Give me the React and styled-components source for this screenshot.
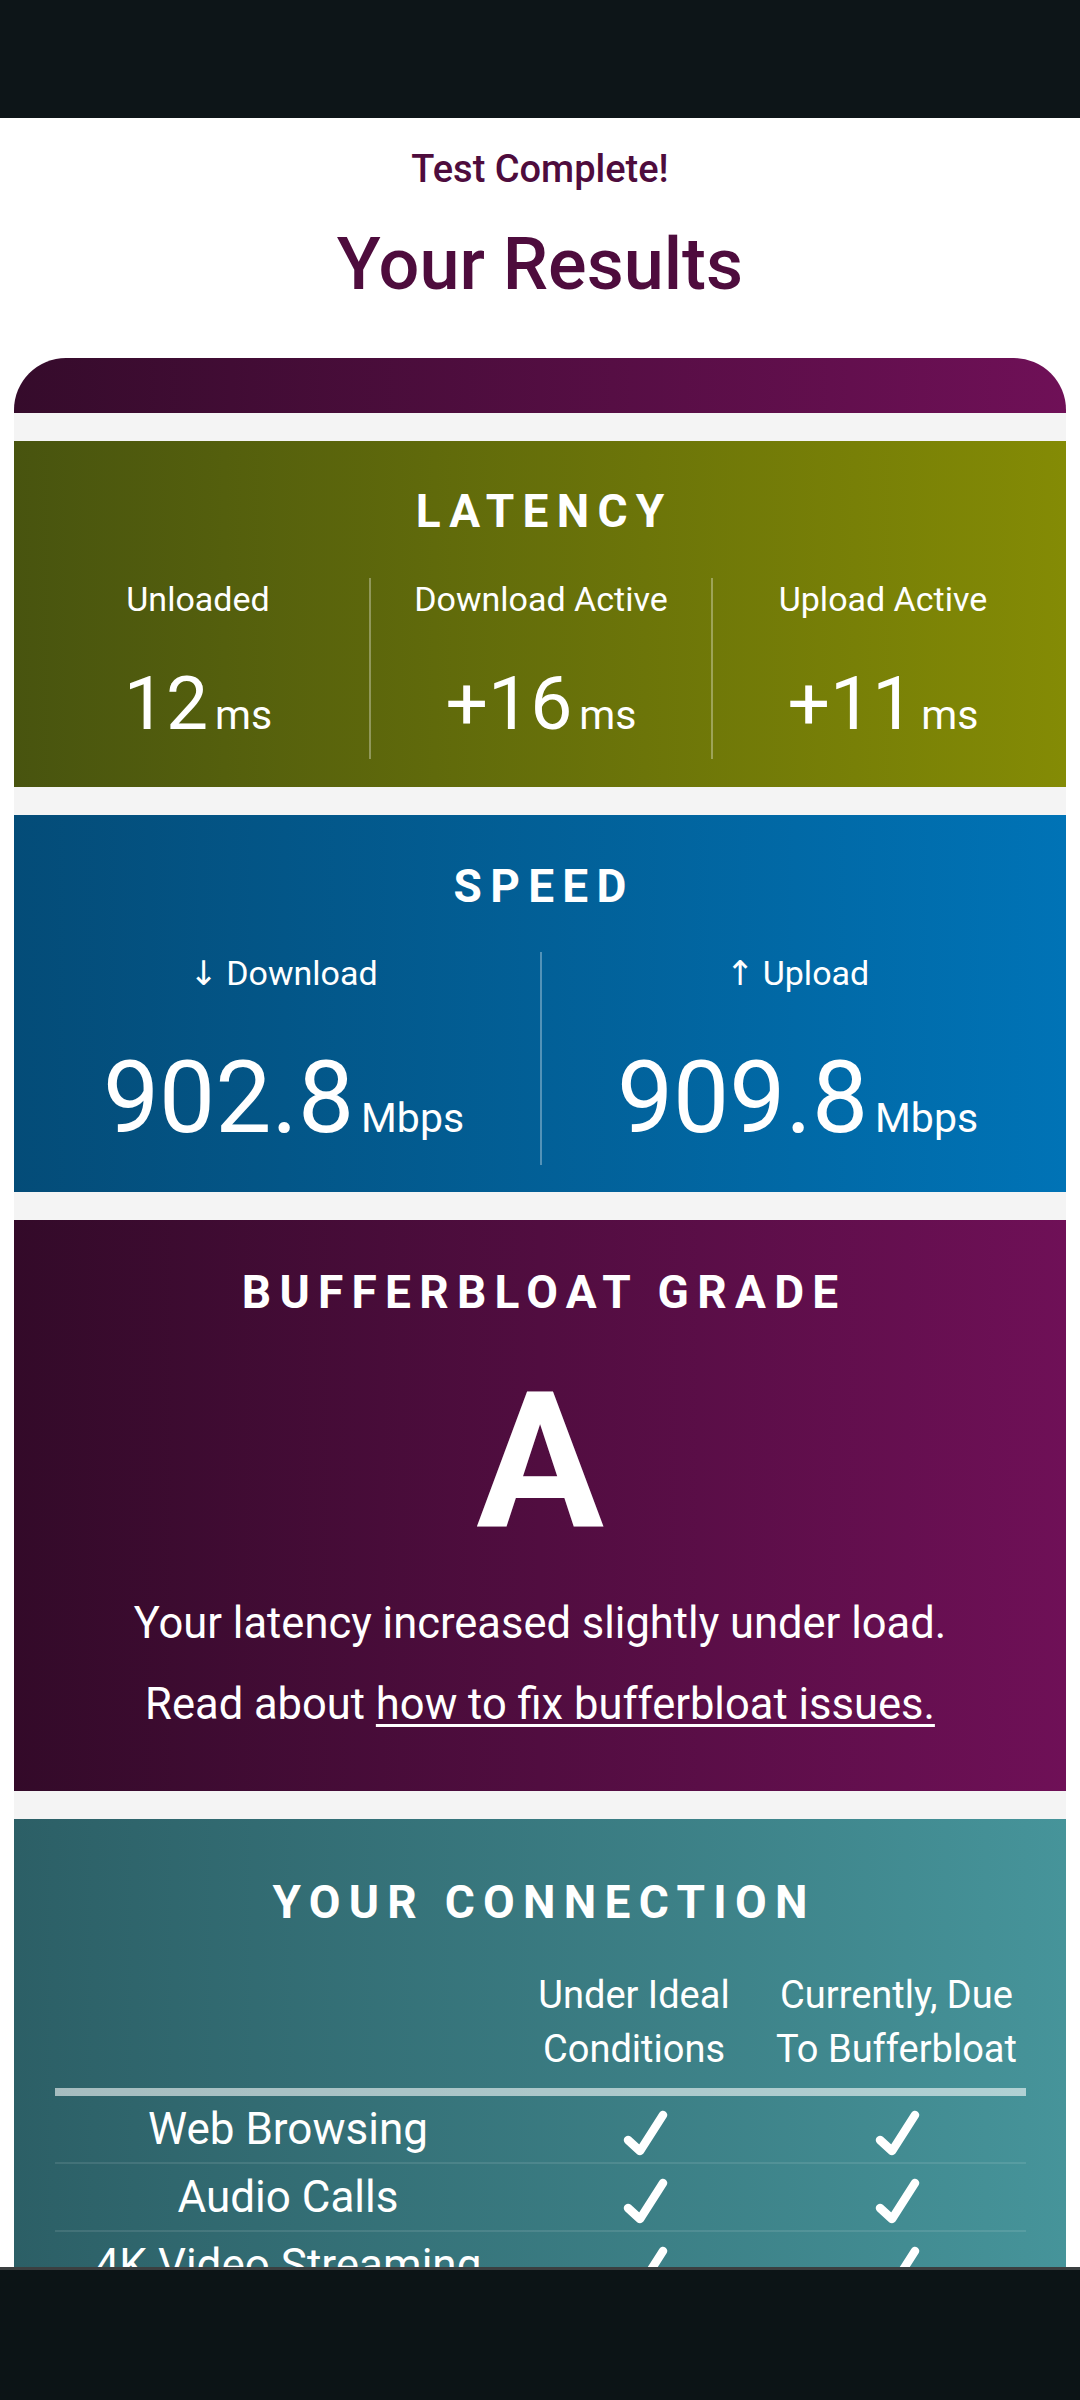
import React from 'react';
import styled, { createGlobalStyle } from 'styled-components';

const GlobalStyle = createGlobalStyle`
  body {
    margin: 0;
    background: #ffffff;
    font-family: Roboto, "Open Sans", "DejaVu Sans", sans-serif;
    color: #ffffff;
  }
`;

const StatusBar = styled.div`
  height: 118px;
  background: #0d1518;
`;

const Intro = styled.header`
  text-align: center;
  color: #4e0c3d;
  padding-top: 32px;
`;

const Kicker = styled.div`
  font-size: 38px;
  font-weight: 500;
  line-height: 1;
`;

const Heading = styled.h1`
  margin: 41px 0 0;
  font-size: 72px;
  font-weight: 500;
  line-height: 1;
`;

const Results = styled.section`
  margin: 57px 14px 0;
`;

const Tab = styled.div`
  height: 55px;
  border-radius: 52px 52px 0 0;
  background: linear-gradient(90deg, #350b2b 0%, #6f1057 100%);
`;

const Stack = styled.div`
  display: flex;
  flex-direction: column;
  gap: 28px;
  padding-top: 28px;
  background: #f4f4f4;
`;

const Panel = styled.div`
  background: linear-gradient(90deg, ${(p) => p.$from} 0%, ${(p) => p.$to} 100%);
  padding: ${(p) => p.$pad};
  text-align: center;
`;

const PanelTitle = styled.h2`
  margin: 0 0 ${(p) => p.$gap || 44}px;
  font-size: 46px;
  font-weight: 700;
  line-height: 1;
  letter-spacing: 0.18em;
  text-indent: 0.18em;
`;

const Columns = styled.div`
  display: grid;
  grid-template-columns: repeat(${(p) => p.$count}, 1fr);
`;

const Column = styled.div`
  display: flex;
  flex-direction: column;
  align-items: center;
  padding: 4px 0 ${(p) => p.$bottom}px;
  & + & {
    border-left: 2px solid rgba(255, 255, 255, 0.32);
  }
`;

const Label = styled.div`
  font-size: 34px;
  line-height: 1;
  margin-bottom: ${(p) => p.$gap}px;
`;

const Value = styled.div`
  font-size: ${(p) => p.$size}px;
  line-height: 1;
  white-space: nowrap;
`;

const Unit = styled.span`
  font-size: ${(p) => p.$size}px;
  margin-left: 7px;
`;

const Grade = styled.div`
  font-size: 190px;
  font-weight: 700;
  line-height: 1;
  margin-bottom: 44px;
`;

const Note = styled.p`
  margin: 0;
  font-size: 43.5px;
  line-height: 48px;
  & + & {
    margin-top: 33px;
  }
`;

const Link = styled.a`
  color: #ffffff;
  text-decoration: underline;
  text-decoration-thickness: 3px;
  text-underline-offset: 5px;
`;

const Table = styled.div`
  margin: 0 40px 0 41px;
`;

const TableHead = styled.div`
  display: grid;
  grid-template-columns: 446px 266px 1fr;
  padding-bottom: 12px;
  border-bottom: 8px solid rgba(255, 255, 255, 0.58);
`;

const HeadCell = styled.div`
  font-size: 38px;
  line-height: 54px;
`;

const Row = styled.div`
  display: grid;
  grid-template-columns: 466px 249px 1fr;
  align-items: center;
  border-bottom: 2px solid rgba(255, 255, 255, 0.1);
`;

const RowLabel = styled.div`
  font-size: 44px;
  line-height: 66px;
`;

const CheckCell = styled.div`
  display: flex;
  justify-content: center;
  padding-top: 8px;
`;

const BottomBar = styled.nav`
  position: fixed;
  left: 0;
  right: 0;
  bottom: 0;
  height: 130px;
  border-top: 3px solid #3b3f40;
  background: #0c1416;
`;

const Check = () => (
  <svg width="48" height="46" viewBox="0 0 48 46">
    <path
      d="M6 30 L18 41 L41 5"
      fill="none"
      stroke="#ffffff"
      strokeWidth="8.5"
      strokeLinecap="round"
      strokeLinejoin="round"
    />
  </svg>
);

const latency = [
  { label: 'Unloaded', value: '12' },
  { label: 'Download Active', value: '+16' },
  { label: 'Upload Active', value: '+11' },
];

const speed = [
  { label: '↓ Download', value: '902.8' },
  { label: '↑ Upload', value: '909.8' },
];

const uses = [
  'Web Browsing',
  'Audio Calls',
  '4K Video Streaming',
  'Video Conferencing',
  'Low Latency Gaming',
];

export default function App() {
  return (
    <>
      <GlobalStyle />
      <StatusBar />
      <Intro>
        <Kicker>Test Complete!</Kicker>
        <Heading>Your Results</Heading>
      </Intro>
      <Results>
        <Tab />
        <Stack>
          <Panel $from="#48540f" $to="#848b05" $pad="47px 13px 28px">
            <PanelTitle>LATENCY</PanelTitle>
            <Columns $count={3}>
              {latency.map((item) => (
                <Column key={item.label} $bottom={18}>
                  <Label $gap={50}>{item.label}</Label>
                  <Value $size={75}>
                    {item.value}
                    <Unit $size={41}>ms</Unit>
                  </Value>
                </Column>
              ))}
            </Columns>
          </Panel>

          <Panel $from="#044c78" $to="#0073b6" $pad="48px 13px 27px">
            <PanelTitle $gap={43}>SPEED</PanelTitle>
            <Columns $count={2}>
              {speed.map((item) => (
                <Column key={item.label} $bottom={17}>
                  <Label $gap={58}>{item.label}</Label>
                  <Value $size={100}>
                    {item.value}
                    <Unit $size={41}>Mbps</Unit>
                  </Value>
                </Column>
              ))}
            </Columns>
          </Panel>

          <Panel $from="#330a29" $to="#6f1057" $pad="49px 13px 62px">
            <PanelTitle $gap={51}>BUFFERBLOAT GRADE</PanelTitle>
            <Grade>A</Grade>
            <Note>Your latency increased slightly under load.</Note>
            <Note>
              Read about <Link href="#bufferbloat">how to fix bufferbloat issues.</Link>
            </Note>
          </Panel>

          <Panel $from="#2c5f66" $to="#46949a" $pad="60px 0 40px">
            <PanelTitle $gap={43}>YOUR CONNECTION</PanelTitle>
            <Table>
              <TableHead>
                <HeadCell />
                <HeadCell>Under Ideal<br />Conditions</HeadCell>
                <HeadCell>Currently, Due<br />To Bufferbloat</HeadCell>
              </TableHead>
              {uses.map((use) => (
                <Row key={use}>
                  <RowLabel>{use}</RowLabel>
                  <CheckCell><Check /></CheckCell>
                  <CheckCell><Check /></CheckCell>
                </Row>
              ))}
            </Table>
          </Panel>
        </Stack>
      </Results>
      <BottomBar />
    </>
  );
}
